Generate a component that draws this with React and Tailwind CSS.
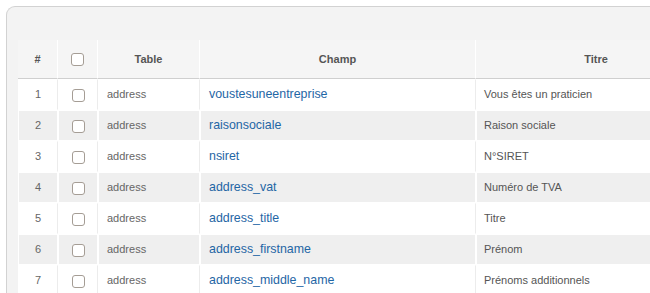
import React from "react";

const rows = [
  { n: 1, table: "address", champ: "voustesuneentreprise", titre: "Vous êtes un praticien" },
  { n: 2, table: "address", champ: "raisonsociale", titre: "Raison sociale" },
  { n: 3, table: "address", champ: "nsiret", titre: "N°SIRET" },
  { n: 4, table: "address", champ: "address_vat", titre: "Numéro de TVA" },
  { n: 5, table: "address", champ: "address_title", titre: "Titre" },
  { n: 6, table: "address", champ: "address_firstname", titre: "Prénom" },
  { n: 7, table: "address", champ: "address_middle_name", titre: "Prénoms additionnels" },
];

function Box() {
  return (
    <span className="inline-block w-[13px] h-[13px] rounded-[3px] border border-[#a59d95] bg-white align-middle" />
  );
}

export default function App() {
  return (
    <div
      className="w-[650px] h-[293px] overflow-hidden bg-white pt-[6px] pl-[6px]"
      style={{ fontFamily: '"Liberation Sans", Arial, sans-serif' }}
    >
      <div className="w-[760px] h-[320px] bg-[#f3f3f3] border-t border-l border-[#d2d2d2] rounded-tl-[9px] pt-[33px] pl-[11px]">
        <table className="border-separate border-spacing-0 text-[11px]">
          <thead>
            <tr className="h-[39px] bg-[#f5f5f5] text-[#555] font-bold">
              <th className="w-[40px] border-r border-white border-b border-b-[#cfcfcf] text-center">#</th>
              <th className="w-[40px] border-r border-white border-b border-b-[#cfcfcf] text-center">
                <Box />
              </th>
              <th className="w-[102px] border-r border-white border-b border-b-[#cfcfcf] text-center">Table</th>
              <th className="w-[276px] border-r border-white border-b border-b-[#cfcfcf] text-center">Champ</th>
              <th className="w-[240px] border-b border-b-[#cfcfcf] text-center">Titre</th>
            </tr>
          </thead>
          <tbody>
            {rows.map((r) => {
              const even = r.n % 2 === 0;
              const cell = even
                ? "bg-[#efefef] border border-white"
                : "bg-white border border-white border-r-[#ececec]";
              return (
                <tr key={r.n} className="h-[31px]">
                  <td className={`${cell} text-center text-[#666]`}>{r.n}</td>
                  <td className={`${cell} text-center`}>
                    <Box />
                  </td>
                  <td className={`${cell} pl-[8px] text-[#666]`}>{r.table}</td>
                  <td className={`${cell} pl-[8px] text-[12.4px] text-[#1f66a5]`}>{r.champ}</td>
                  <td className={`${cell} pl-[7px] text-[#555]`}>{r.titre}</td>
                </tr>
              );
            })}
          </tbody>
        </table>
      </div>
    </div>
  );
}
